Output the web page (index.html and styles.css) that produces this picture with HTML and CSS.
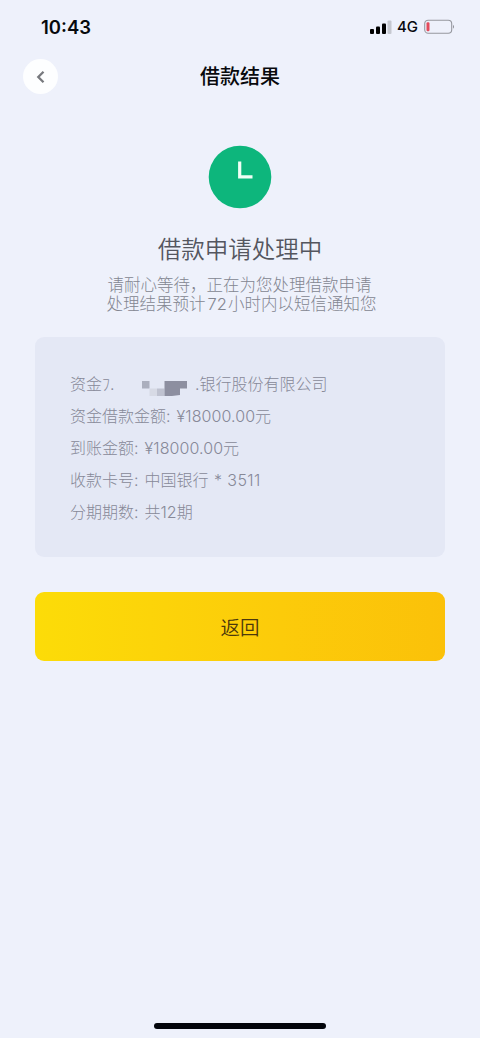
FILE: index.html
```html
<!DOCTYPE html>
<html lang="zh-CN">
<head>
<meta charset="utf-8">
<meta name="viewport" content="width=device-width, initial-scale=1">
<title>借款结果</title>
<link rel="stylesheet" href="styles.css">
</head>
<body>
<div class="screen">
  <div class="status">
    <span class="time">10:43</span>
    <div class="indicators">
      <svg class="signal" width="22" height="14" viewBox="0 0 22 14"><rect x="0" y="9" width="4" height="5" rx="1"/><rect x="6" y="6.5" width="4" height="7.5" rx="1"/><rect x="12" y="3.5" width="4" height="10.5" rx="1"/><rect x="17.5" y="0.5" width="4" height="13.5" rx="1" fill="#c5c8d0"/></svg>
      <span class="network">4G</span>
      <svg class="battery" width="32" height="16" viewBox="0 0 32 16"><rect x="0.7" y="1.2" width="27" height="13" rx="3.5" fill="none" stroke="#96989f" stroke-width="1.1"/><rect x="2.5" y="3.2" width="3" height="9" rx="1.2" fill="#e34a5b"/><path d="M29 5.7q2 2 0 4z" fill="#8d8f96"/></svg>
    </div>
  </div>
  <header class="nav">
    <button class="back" aria-label="返回"><svg width="12" height="14" viewBox="0 0 12 14"><path d="M8.5 1.8 3.3 7l5.2 5.2" fill="none" stroke="#77797e" stroke-width="2.3"/></svg></button>
    <h1 class="title">借款结果</h1>
  </header>
  <main class="content">
    <svg class="clock" width="64" height="64" viewBox="0 0 64 64"><circle cx="32" cy="32" r="31.3" fill="#0db67c"/><path d="M31.7 16.5v15.3H44.5" fill="none" stroke="#f1fff5" stroke-width="3.2"/></svg>
    <h2 class="heading">借款申请处理中</h2>
    <p class="hint">请耐心等待，正在为您处理借款申请</p>
    <p class="hint second">处理结果预计<span class="hours">72</span>小时内以短信通知您</p>
    <section class="card">
      <div class="row funder"><span class="label">资金ﾌ.</span><svg class="mosaic" width="46" height="16" viewBox="0 0 46 16"><path fill="#abafbe" d="M0 0h7.5v7.5H0z"/><path fill="#d7dae5" d="M7.5 7.5H15V15H7.5z"/><path fill="#bfc2d0" d="M15 7.5h7.5V15H15z"/><path fill="#8d8fa0" d="M22.5 0h22.5v7.5h-7V14l-8 1h-7.5z"/></svg><span>.银行股份有限公司</span></div>
      <div class="row">资金借款金额: <span class="num">¥18000.00</span>元</div>
      <div class="row">到账金额: <span class="num">¥18000.00</span>元</div>
      <div class="row">收款卡号: <span class="bank">中国银行</span> <span class="card-no">* 3511</span></div>
      <div class="row">分期期数: <span class="bank">共</span><span class="term">12</span>期</div>
    </section>
    <button class="submit">返回</button>
  </main>
  <div class="home"></div>
</div>
</body>
</html>
```
FILE: styles.css
```css
* { box-sizing: border-box; }
body { margin: 0; background: #eef1fb; font-family: Inter, "Noto Sans CJK SC", sans-serif; }
button { border: 0; padding: 0; font-family: inherit; }
h1, h2, p { margin: 0; }
.screen { height: 1038px; display: flex; flex-direction: column; align-items: center; overflow: hidden; }
.status { width: 100%; height: 53px; padding: 0 24px 0 41px; display: flex; justify-content: space-between; align-items: center; color: #08090d; }
.time { font-size: 18.5px; font-weight: 600; }
.indicators { display: flex; align-items: center; }
.signal { margin-right: -1px; }
.network { font-size: 15px; font-weight: 500; margin: 0 6px 0 6px; }
.nav { width: 100%; height: 47px; padding: 0 23px; display: grid; grid-template-columns: 36px 1fr 36px; align-items: center; }
.back { width: 35px; height: 35px; border-radius: 50%; background: #fdfeff; display: flex; align-items: center; justify-content: center; }
.title { padding-top: 1px; font-size: 20px; line-height: 30px; font-weight: 500; text-align: center; color: #08090d; }
.content { width: 410px; display: flex; flex-direction: column; align-items: center; }
.clock { margin-top: 45px; }
.heading { margin-top: 23px; font-size: 23.5px; line-height: 36px; font-weight: 350; color: #54565f; }
.hint { margin-top: 7px; margin-right: 1px; font-size: 16.5px; line-height: 20px; font-weight: 300; color: #838691; white-space: nowrap; }
.hint.second { margin-top: -1px; margin-left: 4px; }
.hours { margin: 0 1px 0 2px; }
.card { width: 410px; height: 220px; margin-top: 23px; padding: 31px 35px; border-radius: 9px; background: #e4e8f5; color: #878998; font-size: 16px; font-weight: 300; line-height: 32px; white-space: nowrap; }
.row { height: 32px; }
.num, .bank { margin-left: 1.5px; }
.num { letter-spacing: 0.08px; }
.card-no { margin-left: 1px; letter-spacing: 0.4px; }
.funder { display: flex; align-items: center; }
.label { width: 72px; }
.mosaic { margin: 10px 7px 0 0; }
.submit { width: 410px; height: 69px; margin-top: 35px; border-radius: 9px; background: linear-gradient(90deg, #fcdc08, #fccb0a 60%, #fbc109); color: #4b380c; font-size: 19.5px; font-weight: 350; }
.home { width: 172px; height: 6px; margin-top: auto; margin-bottom: 9px; border-radius: 3px; background: #03050b; }
```
